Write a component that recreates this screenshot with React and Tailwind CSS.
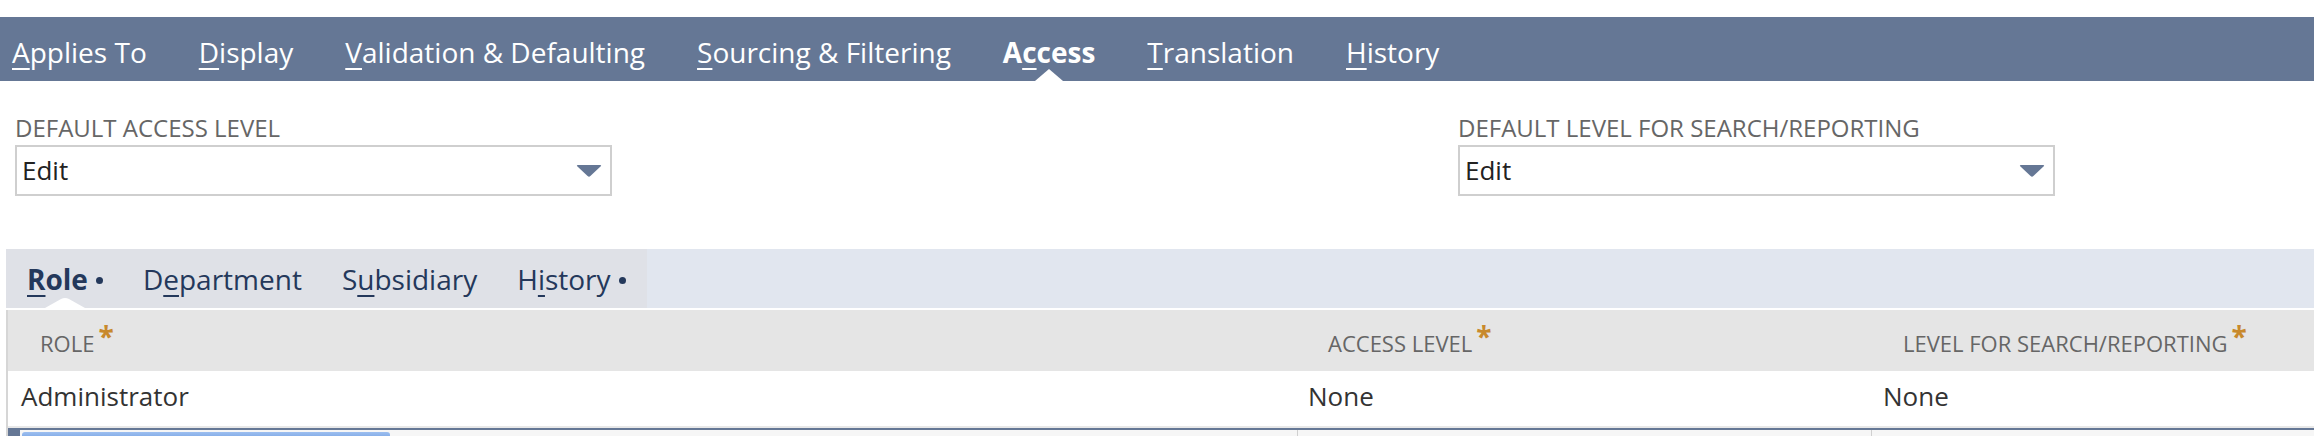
import React from "react";

const mainTabs = [
  ["", "A", "pplies To"],
  ["", "D", "isplay"],
  ["", "V", "alidation & Defaulting"],
  ["", "S", "ourcing & Filtering"],
  ["A", "c", "cess", true],
  ["", "T", "ranslation"],
  ["", "H", "istory"],
];

const subTabs = [
  ["", "R", "ole", true, true],
  ["D", "e", "partment"],
  ["S", "u", "bsidiary"],
  ["H", "i", "story", false, true],
];

function DropArrow() {
  return (
    <svg width="26" height="12" viewBox="0 0 26 12">
      <path d="M2 0 H24 Q26 0 24.5 1.6 L14.4 11 Q13 12.3 11.6 11 L1.5 1.6 Q0 0 2 0 Z" fill="#657795" />
    </svg>
  );
}

function Field({ label, className = "" }) {
  return (
    <div className={className}>
      <div className="text-[24px] leading-[32px] text-[#666] uppercase">{label}</div>
      <div className="mt-px w-[597px] h-[51px] border-2 border-[#cfcfcf] flex items-center justify-between pl-[5px] pr-[8px] text-[26px] text-[#222]">
        <span>Edit</span>
        <DropArrow />
      </div>
    </div>
  );
}

function Required() {
  return (
    <span className="ml-[4px] relative -top-[5px] text-[28px] font-bold leading-none text-[#c8892c]">*</span>
  );
}

export default function App() {
  return (
    <div className="w-[2314px] h-[436px] overflow-hidden bg-white font-['Open_Sans',sans-serif]">
      <div className="mt-[17px] h-[64px] bg-[#657795] flex items-center gap-[52px] pl-[12px] pt-[5px] text-[28px] text-white">
        {mainTabs.map(([pre, key, post, active]) => (
          <div key={key + post} className={active ? "relative h-full flex items-center font-bold" : "relative h-full flex items-center"}>
            <span>
              {pre}
              <u className="underline decoration-2 underline-offset-[5px]">{key}</u>
              {post}
            </span>
            {active && (
              <svg className="absolute bottom-0 left-1/2 -translate-x-1/2" width="28" height="12" viewBox="0 0 28 12">
                <path d="M0 12 L14 0 L28 12 Z" fill="#fff" />
              </svg>
            )}
          </div>
        ))}
      </div>

      <div className="flex px-[15px] pt-[31px]">
        <Field label="Default Access Level" className="w-[1443px]" />
        <Field label="Default Level for Search/Reporting" />
      </div>

      <div className="mt-[53px] ml-[6px] h-[59px] bg-[#e1e6ef] flex">
        <div className="w-[641px] bg-[#dfe1e7] flex items-center gap-[40px] pl-[21px] text-[28px] text-[#24385b]">
          {subTabs.map(([pre, key, post, active, dot]) => (
            <div key={key + post} className="relative h-full flex items-center">
              <span className={active ? "font-bold" : ""}>
                {pre}
                <u className="underline decoration-2 underline-offset-[5px]">{key}</u>
                {post}
              </span>
              {dot && <span className="ml-[8px] mt-[3px] w-[7px] h-[7px] rounded-full bg-[#24385b]" />}
              {active && (
                <svg className="absolute bottom-0 left-1/2 -translate-x-1/2" width="40" height="10" viewBox="0 0 40 10">
                  <path d="M0 10 L16 1 Q20 -1 24 1 L40 10 Z" fill="#fff" />
                </svg>
              )}
            </div>
          ))}
        </div>
      </div>

      <div className="mt-[2px] ml-[6px] border-l-2 border-[#d6d6d6]">
        <div className="h-[61px] bg-[#e5e5e5] flex items-center pt-[6px] text-[22px] text-[#666] uppercase">
          <div className="w-[1289px] pl-[32px]">
            Role<Required />
          </div>
          <div className="w-[574px] pl-[31px]">
            Access Level<Required />
          </div>
          <div className="flex-1 pl-[32px]">
            Level for Search/Reporting<Required />
          </div>
        </div>

        <div className="h-[57px] border-b-2 border-[#e8e8e8] flex items-center pb-[5px] text-[26px] text-[#333]">
          <div className="w-[1289px] pl-[13px]">Administrator</div>
          <div className="w-[574px] pl-[11px]">None</div>
          <div className="flex-1 pl-[12px]">None</div>
        </div>

        <div className="h-[20px] border-t-2 border-[#657795] bg-[#f6f6f6] flex">
          <div className="w-[1289px] flex">
            <div className="w-[12px] bg-[#657795]" />
            <div className="ml-[2px] mt-[2px] w-[368px] h-[16px] rounded-t-[3px] bg-linear-to-b from-[#9dbff0] to-[#4a82d2]" />
          </div>
          <div className="w-[574px] border-l border-[#d0d0d0]" />
          <div className="flex-1 border-l border-[#d0d0d0]" />
        </div>
      </div>
    </div>
  );
}
